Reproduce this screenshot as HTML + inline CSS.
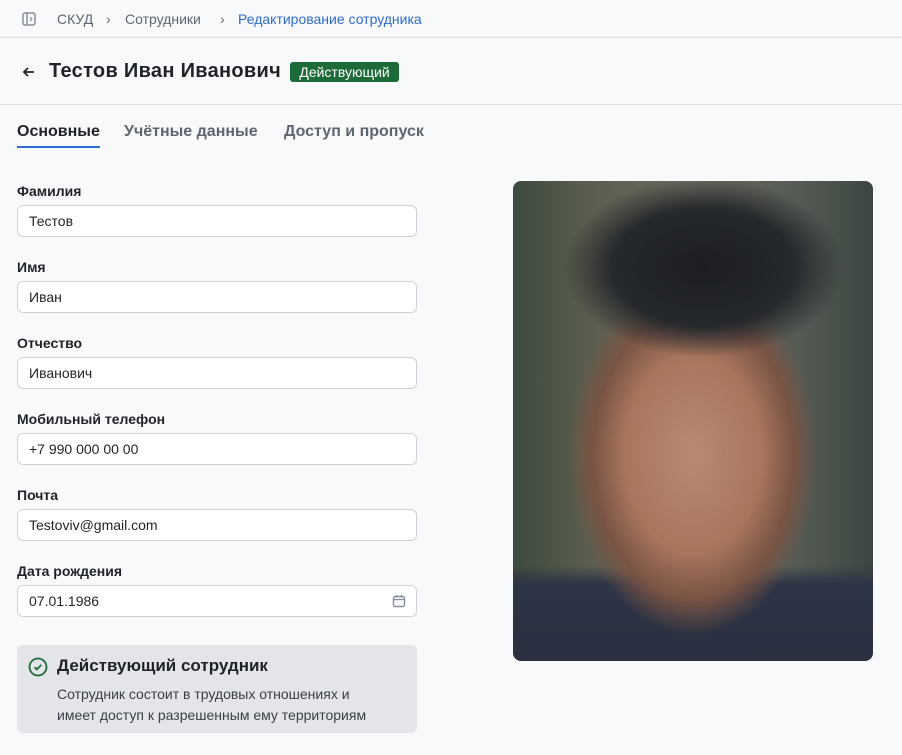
<!DOCTYPE html>
<html><head><meta charset="utf-8"><style>
*{box-sizing:border-box;margin:0;padding:0}
body{width:902px;height:755px;overflow:hidden;background:#f8f9fa;font-family:"Liberation Sans","DejaVu Sans",sans-serif;color:#1f2328;position:relative}
.bc{position:absolute;top:0;left:0;right:0;height:38px;border-bottom:1px solid #dde0e5;font-size:14px;color:#5f6670}
.bc span{position:absolute;top:11px}
.hd{position:absolute;top:39px;left:0;right:0;height:66px;border-bottom:1px solid #dde0e5}
.title{position:absolute;left:49px;top:21px;font-size:20px;letter-spacing:0.3px;font-weight:bold;color:#1f2328}
.badge{position:absolute;left:290px;top:23px;height:20px;width:109px;text-align:center;background:#1e6b3a;color:#fff;font-size:14px;line-height:20px;border-radius:3px}
.tab{position:absolute;top:123px;font-size:16px;font-weight:bold;color:#5f6670}
.lbl{position:absolute;left:17px;font-size:14px;font-weight:bold;color:#1f2328}
.inp{position:absolute;left:17px;width:400px;height:32px;border:1px solid #cfd3d9;border-radius:6px;background:#fff;font-size:14px;line-height:31px;padding-left:11px;color:#1f2328}
.card{position:absolute;left:17px;top:645px;width:400px;height:88px;background:#e3e5e9;border-radius:6px}
.photo{position:absolute;left:513px;top:181px;width:360px;height:480px;border-radius:8px;overflow:hidden;
background:
radial-gradient(ellipse 140px 90px at 53% 18%,#1c1e21 0,#25282c 65%,transparent 100%),
radial-gradient(ellipse 125px 180px at 50% 57%,#b98a72 0,#a8755d 55%,#7a5444 80%,transparent 100%),
linear-gradient(to bottom,transparent 0,transparent 80%,#2d3446 84%,#2a3040 100%),
linear-gradient(90deg,#3d4a3c 0,#5a5d4e 20%,#6b6b5e 50%,#545a54 80%,#3c4640 100%)}
</style></head><body>
<div class="bc">
<svg style="position:absolute;left:22px;top:12px" width="14" height="14" viewBox="0 0 14 14"><rect x="1" y="1" width="12" height="12" rx="2" fill="none" stroke="#8a9099" stroke-width="1.5"/><line x1="5" y1="1" x2="5" y2="13" stroke="#8a9099" stroke-width="1.5"/><path d="M8 5l2 2-2 2" fill="none" stroke="#8a9099" stroke-width="1.2"/></svg>
<span style="left:57px">СКУД</span><span style="left:106px">›</span><span style="left:125px">Сотрудники</span><span style="left:220px">›</span><span style="left:238px;color:#2f6bcf">Редактирование сотрудника</span>
</div>
<div class="hd">
<svg style="position:absolute;left:22px;top:26px" width="14" height="14" viewBox="0 0 14 14"><path d="M12 7H2M6 3L2 7l4 4" fill="none" stroke="#1f2328" stroke-width="1.8"/></svg>
<div class="title">Тестов Иван Иванович</div><div class="badge">Действующий</div>
</div>
<div class="tab" style="left:17px;color:#1f2328">Основные</div>
<div style="position:absolute;left:17px;top:146px;width:83px;height:2px;background:#2f6bcf"></div>
<div class="tab" style="left:124px">Учётные данные</div>
<div class="tab" style="left:284px">Доступ и пропуск</div>

<div class="lbl" style="top:183px">Фамилия</div><div class="inp" style="top:205px">Тестов</div>
<div class="lbl" style="top:259px">Имя</div><div class="inp" style="top:281px">Иван</div>
<div class="lbl" style="top:335px">Отчество</div><div class="inp" style="top:357px">Иванович</div>
<div class="lbl" style="top:411px">Мобильный телефон</div><div class="inp" style="top:433px">+7 990 000 00 00</div>
<div class="lbl" style="top:487px">Почта</div><div class="inp" style="top:509px">Testoviv@gmail.com</div>
<div class="lbl" style="top:563px">Дата рождения</div><div class="inp" style="top:585px">07.01.1986
<svg style="position:absolute;right:10px;top:8px" width="14" height="14" viewBox="0 0 14 14"><rect x="1.5" y="2.5" width="11" height="10" rx="1.5" fill="none" stroke="#8a9099" stroke-width="1.4"/><line x1="1.5" y1="5.5" x2="12.5" y2="5.5" stroke="#8a9099" stroke-width="1.4"/><line x1="4.5" y1="1" x2="4.5" y2="3.5" stroke="#8a9099" stroke-width="1.4"/><line x1="9.5" y1="1" x2="9.5" y2="3.5" stroke="#8a9099" stroke-width="1.4"/></svg></div>

<div class="card">
<svg style="position:absolute;left:11px;top:12px" width="20" height="20" viewBox="0 0 20 20"><circle cx="10" cy="10" r="8.5" fill="none" stroke="#1e6b3a" stroke-width="1.8"/><path d="M6.5 10.2l2.3 2.2 4.5-4.5" fill="none" stroke="#1e6b3a" stroke-width="1.8"/></svg>
<div style="position:absolute;left:40px;top:11px;font-size:17px;font-weight:bold">Действующий сотрудник</div>
<div style="position:absolute;left:40px;top:39px;font-size:14px;line-height:21px;color:#3a3f46">Сотрудник состоит в трудовых отношениях и<br>имеет доступ к разрешенным ему территориям</div>
</div>
<div class="photo"></div>
</body></html>
